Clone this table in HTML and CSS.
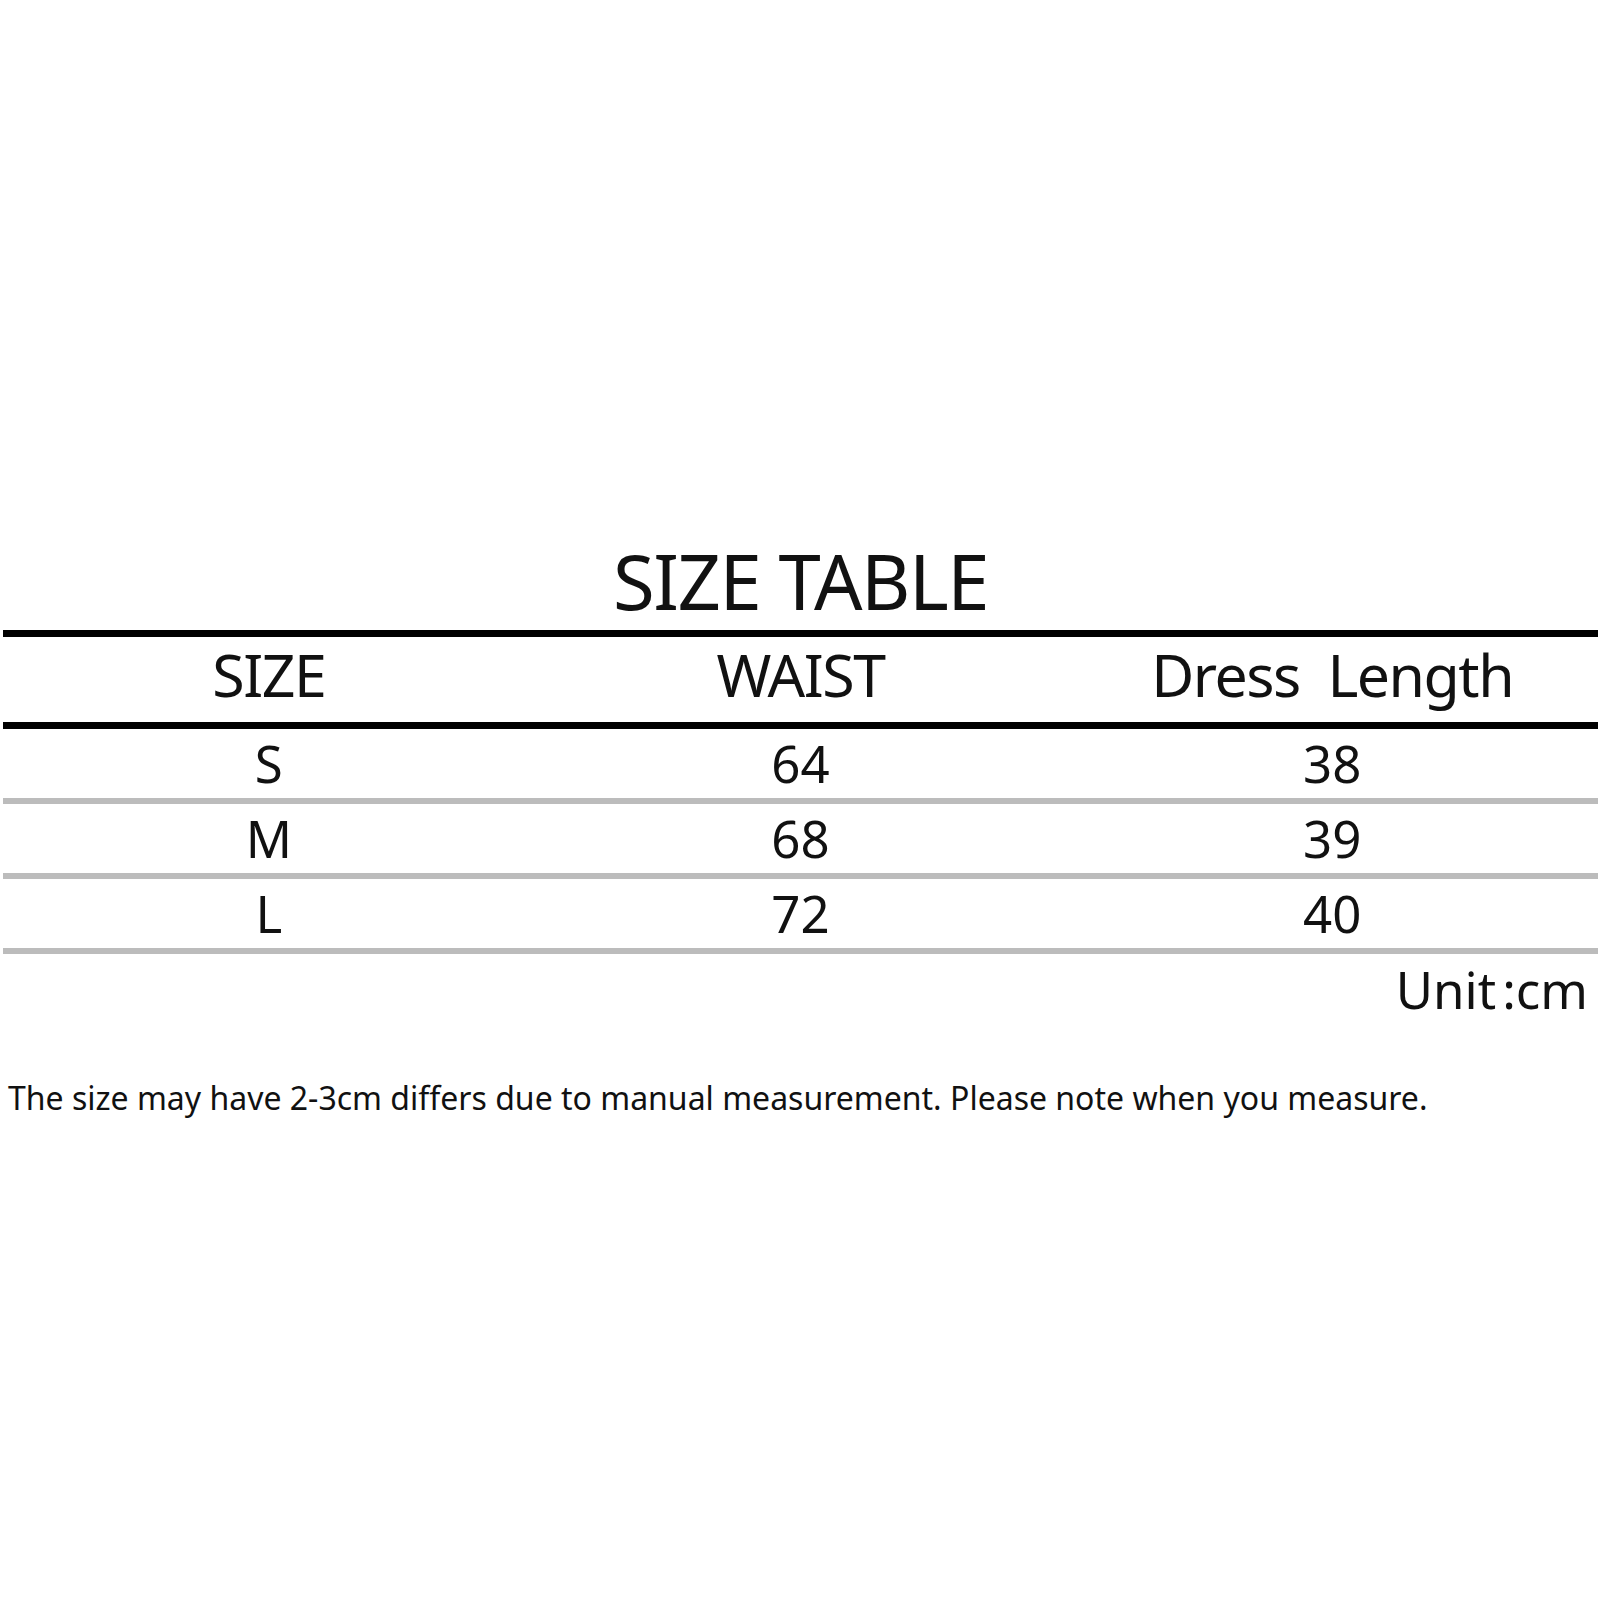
FILE: index.html
```html
<!DOCTYPE html>
<html>
<head>
<meta charset="utf-8">
<link rel="stylesheet" href="styles.css">
</head>
<body>
<div class="page">
  <h1 class="title">SIZE TABLE</h1>
  <div class="table">
    <div class="row head">
      <div class="cell">SIZE</div>
      <div class="cell">WAIST</div>
      <div class="cell">Dress&nbsp; Length</div>
    </div>
    <div class="row data">
      <div class="cell">S</div>
      <div class="cell">64</div>
      <div class="cell">38</div>
    </div>
    <div class="row data">
      <div class="cell">M</div>
      <div class="cell">68</div>
      <div class="cell">39</div>
    </div>
    <div class="row data">
      <div class="cell">L</div>
      <div class="cell">72</div>
      <div class="cell">40</div>
    </div>
  </div>
  <div class="unit">Unit<span class="colon">:</span>cm</div>
  <p class="note">The size may have 2-3cm differs due to manual measurement. Please note when you measure.</p>
</div>
</body>
</html>
```

FILE: styles.css
```css
html, body {
  margin: 0;
  padding: 0;
  background: #ffffff;
}

.page {
  width: 1601px;
  height: 1601px;
  font-family: "Noto Sans", "Open Sans", sans-serif;
  color: #111111;
  padding-top: 536px;
  box-sizing: border-box;
}

.title {
  margin: 0 0 4px 0;
  font-weight: 400;
  font-size: 76px;
  line-height: 90px;
  text-align: center;
  letter-spacing: -1.5px;
}

.table {
  margin: 0 3px;
}

.row {
  display: grid;
  grid-template-columns: 1fr 1fr 1fr;
  align-items: center;
  text-align: center;
}

.head {
  border-top: 7px solid #000000;
  border-bottom: 7px solid #000000;
  height: 85px;
  box-sizing: content-box;
  font-size: 59px;
  line-height: 59px;
  letter-spacing: -1.5px;
}

.head .cell {
  margin-top: -10px;
}

.data {
  height: 69px;
  border-bottom: 6px solid #bcbcbc;
  font-size: 51px;
  line-height: 51px;
}

.unit {
  text-align: right;
  padding-right: 13px;
  font-size: 51px;
  line-height: 52px;
  margin-top: 9px;
}

.colon {
  margin-left: 6px;
}

.note {
  margin: 63px 0 0 8px;
  font-size: 32px;
  line-height: 40px;
  letter-spacing: 0;
}
```
